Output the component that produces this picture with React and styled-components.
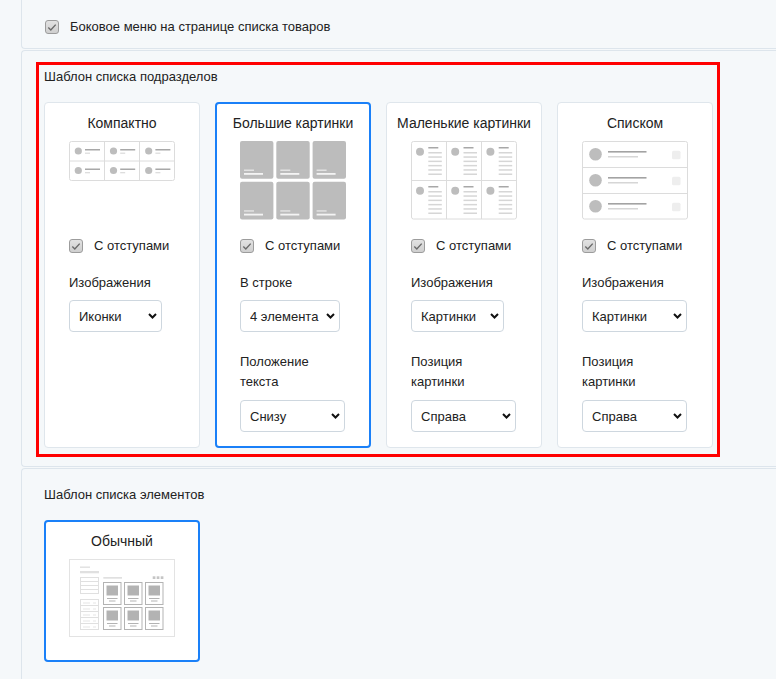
import React from "react";
import styled, { createGlobalStyle } from "styled-components";

const GlobalStyle = createGlobalStyle`
  html, body {
    margin: 0;
    padding: 0;
    background: #f5f8fa;
    font-family: "Liberation Sans", Arial, sans-serif;
    color: #222;
  }
`;

const Page = styled.div`
  padding-left: 21px;
  overflow: hidden;
  height: 679px;
`;

const Section = styled.div`
  border: 1px solid #dde5ec;
  border-right: none;
  border-top: ${(p) => (p.first ? "none" : "1px solid #dde5ec")};
  border-radius: ${(p) => (p.first ? "0 0 0 4px" : "4px 0 0 4px")};
  margin-top: ${(p) => (p.first ? "0" : "1px")};
  padding: ${(p) => p.pad};
`;

const CheckRow = styled.label`
  display: flex;
  align-items: center;
  gap: ${(p) => p.gap || 11}px;
  height: 20px;
  font-size: 13px;
  line-height: 20px;
`;

const Box = styled.span`
  width: 14px;
  height: 14px;
  box-sizing: border-box;
  border: 1px solid #9c9c9c;
  border-radius: 3px;
  background: linear-gradient(#e2e2e2, #cfcfcf);
  display: flex;
  align-items: center;
  justify-content: center;
  flex: none;
`;

const Highlight = styled.div`
  width: fit-content;
  border: 3px solid #ff0000;
  padding: 3px 4px 6px 5px;
`;

const GroupTitle = styled.div`
  font-size: 13px;
  line-height: 18px;
  margin-bottom: ${(p) => p.mb}px;
`;

const Cards = styled.div`
  display: flex;
  gap: 15px;
  align-items: stretch;
`;

const Card = styled.div`
  width: 156px;
  box-sizing: border-box;
  background: #fff;
  border: ${(p) => (p.active ? "2px solid #1a80f8" : "1px solid #dfe6ec")};
  border-radius: 4px;
  padding: ${(p) => (p.active ? "9px 23px 14px" : "10px 24px 15px")};
  display: flex;
  flex-direction: column;
`;

const CardTitle = styled.div`
  font-size: 14px;
  line-height: 20px;
  text-align: center;
  margin: 0 -20px 8px;
  white-space: nowrap;
`;

const Preview = styled.div`
  height: ${(p) => p.h || 80}px;
  margin-bottom: ${(p) => p.mb ?? 15}px;
  display: flex;
  align-items: flex-start;
`;

const FieldLabel = styled.div`
  font-size: 13px;
  line-height: 20px;
  margin-top: ${(p) => p.mt}px;
  margin-bottom: ${(p) => p.mb}px;
`;

const SelectWrap = styled.div`
  position: relative;
  width: ${(p) => p.w}px;
`;

const SelectBox = styled.select`
  appearance: none;
  -webkit-appearance: none;
  width: 100%;
  height: 32px;
  box-sizing: border-box;
  border: 1px solid #ced7df;
  border-radius: 4px;
  background: #fff;
  padding: 0 20px 0 9px;
  font-family: "Liberation Sans", Arial, sans-serif;
  font-size: 13px;
  color: #222;
  outline: none;
`;

const Chevron = styled.svg`
  position: absolute;
  right: 5px;
  top: 13px;
  pointer-events: none;
`;

const Check = () => (
  <Box>
    <svg width="10" height="9" viewBox="0 0 10 9">
      <path d="M1.3 4.6 L3.8 7 L8.7 1.6" fill="none" stroke="#6a6a6a" strokeWidth="1.4" />
    </svg>
  </Box>
);

const Select = ({ value, w }) => (
  <SelectWrap w={w}>
    <SelectBox defaultValue={value}>
      <option>{value}</option>
    </SelectBox>
    <Chevron width="9" height="6" viewBox="0 0 9 6">
      <path d="M1 1 L4.5 4.5 L8 1" fill="none" stroke="#111" strokeWidth="2" />
    </Chevron>
  </SelectWrap>
);

const CompactPic = () => {
  const cells = [];
  for (let r = 0; r < 2; r++)
    for (let c = 0; c < 3; c++) {
      const ox = c * 35.2;
      const oy = r * 19.5;
      cells.push(
        <g key={`${r}${c}`}>
          <circle cx={ox + 9.3} cy={oy + 10} r="3.6" fill="#bdbdbd" />
          <rect x={ox + 16} y={oy + 8} width="15" height="1.5" fill="#a8a8a8" />
          <rect x={ox + 16} y={oy + 11.6} width="5" height="1.2" fill="#dadada" />
        </g>
      );
    }
  return (
    <svg width="106" height="40" viewBox="0 0 106 40">
      <rect x="0.5" y="0.5" width="105" height="39" rx="2" fill="#fff" stroke="#dcdcdc" />
      <line x1="35.5" y1="0.5" x2="35.5" y2="39.5" stroke="#dcdcdc" />
      <line x1="70.5" y1="0.5" x2="70.5" y2="39.5" stroke="#dcdcdc" />
      <line x1="0.5" y1="20" x2="105.5" y2="20" stroke="#dcdcdc" />
      {cells}
    </svg>
  );
};

const BigPic = () => {
  const tiles = [];
  for (let r = 0; r < 2; r++)
    for (let c = 0; c < 3; c++) {
      const x = c * 36.3;
      const y = r * 40.7;
      tiles.push(
        <g key={`${r}${c}`}>
          <rect x={x} y={y} width="33.4" height="37.7" rx="2" fill="#bcbcbc" />
          <rect x={x + 4} y={y + 28.5} width="10" height="1.5" fill="#e2e2e2" />
          <rect x={x + 4} y={y + 32} width="19" height="1.8" fill="#f4f4f4" />
        </g>
      );
    }
  return (
    <svg width="106" height="79" viewBox="0 0 106 79">
      {tiles}
    </svg>
  );
};

const SmallPic = () => {
  const cells = [];
  for (let r = 0; r < 2; r++)
    for (let c = 0; c < 3; c++) {
      const ox = c * 35.2;
      const oy = r * 39;
      cells.push(
        <g key={`${r}${c}`}>
          <circle cx={ox + 9} cy={oy + 10.7} r="4" fill="#bdbdbd" />
          <rect x={ox + 17.3} y={oy + 6} width="10" height="1.5" fill="#a8a8a8" />
          {[11, 15.3, 19.6, 23.9, 28.2, 32.5].map((ly) => (
            <rect key={ly} x={ox + 17.3} y={oy + ly} width="13.5" height="1.5" fill="#d6d6d6" />
          ))}
        </g>
      );
    }
  return (
    <svg width="106" height="79" viewBox="0 0 106 79">
      <rect x="0.5" y="0.5" width="105" height="77.5" rx="2" fill="#fff" stroke="#dcdcdc" />
      <line x1="35.5" y1="0.5" x2="35.5" y2="78" stroke="#dcdcdc" />
      <line x1="70.5" y1="0.5" x2="70.5" y2="78" stroke="#dcdcdc" />
      <line x1="0.5" y1="39.5" x2="105.5" y2="39.5" stroke="#dcdcdc" />
      {cells}
    </svg>
  );
};

const ListPic = () => (
  <svg width="106" height="79" viewBox="0 0 106 79">
    <rect x="0.5" y="0.5" width="105" height="77.5" rx="2" fill="#fff" stroke="#dcdcdc" />
    <line x1="0.5" y1="26.5" x2="105.5" y2="26.5" stroke="#dcdcdc" />
    <line x1="0.5" y1="52.5" x2="105.5" y2="52.5" stroke="#dcdcdc" />
    {[0, 26, 52].map((oy) => (
      <g key={oy}>
        <circle cx="13.5" cy={oy + 13.3} r="6.3" fill="#bdbdbd" />
        <rect x="26" y={oy + 10} width="38.5" height="1.6" fill="#a3a3a3" />
        <rect x="26" y={oy + 15} width="30" height="1.5" fill="#d6d6d6" />
        <rect x="90" y={oy + 9.7} width="8.5" height="8.5" rx="1.5" fill="#eeeeee" />
      </g>
    ))}
  </svg>
);

const RegularPic = () => (
  <svg width="106" height="78" viewBox="0 0 106 78">
    <rect x="0.5" y="0.5" width="105" height="77" fill="#fff" stroke="#e3e3e3" />
    <rect x="11" y="7.5" width="10" height="1.4" fill="#e0e0e0" />
    <rect x="11" y="12" width="19" height="2.3" fill="#e0e0e0" />
    <rect x="11.5" y="18.5" width="18" height="16" fill="none" stroke="#e0e0e0" />
    {[22.5, 26.5, 30.5].map((y) => (
      <line key={y} x1="11.5" y1={y} x2="29.5" y2={y} stroke="#e0e0e0" />
    ))}
    <rect x="11.5" y="40.5" width="18" height="30" fill="none" stroke="#e0e0e0" />
    {[46.5, 52.5, 58.5, 64.5].map((y) => (
      <line key={y} x1="11.5" y1={y} x2="29.5" y2={y} stroke="#e0e0e0" />
    ))}
    {[43.5, 49.5, 55.5, 61.5, 67.5].map((y) => (
      <g key={y}>
        <rect x="14" y={y} width="7" height="1" fill="#e6e6e6" />
        <rect x="24" y={y} width="3" height="1" fill="#e6e6e6" />
      </g>
    ))}
    <rect x="34.3" y="18" width="18.7" height="1.7" fill="#e0e0e0" />
    {[83.7, 87.7, 91.7].map((x) => (
      <rect key={x} x={x} y="17.3" width="2.7" height="2.7" fill="#c5c5c5" />
    ))}
    {[23.5, 48.5].map((y) =>
      [34.5, 55.5, 76.5].map((x) => (
        <g key={`${x}-${y}`}>
          <rect x={x} y={y} width="17.5" height="22" fill="#fff" stroke="#b3b3b3" />
          <rect x={x + 3} y={y + 3} width="11.5" height="10" fill="#b3b3b3" />
          <rect x={x + 3.5} y={y + 15.5} width="10.5" height="1" fill="#b3b3b3" />
          <rect x={x + 5.5} y={y + 18} width="6.5" height="1" fill="#b3b3b3" />
        </g>
      ))
    )}
  </svg>
);

const templates = [
  {
    title: "Компактно",
    pic: <CompactPic />,
    fields: [{ label: ["Изображения"], value: "Иконки", w: 93 }],
  },
  {
    title: "Большие картинки",
    pic: <BigPic />,
    active: true,
    fields: [
      { label: ["В строке"], value: "4 элемента", w: 100 },
      { label: ["Положение", "текста"], value: "Снизу", w: 105 },
    ],
  },
  {
    title: "Маленькие картинки",
    pic: <SmallPic />,
    fields: [
      { label: ["Изображения"], value: "Картинки", w: 93 },
      { label: ["Позиция", "картинки"], value: "Справа", w: 105 },
    ],
  },
  {
    title: "Списком",
    pic: <ListPic />,
    fields: [
      { label: ["Изображения"], value: "Картинки", w: 105 },
      { label: ["Позиция", "картинки"], value: "Справа", w: 105 },
    ],
  },
];

function App() {
  return (
    <>
      <GlobalStyle />
      <Page>
        <Section first pad="17px 0 11px 23px">
          <CheckRow>
            <Check />
            Боковое меню на странице списка товаров
          </CheckRow>
        </Section>

        <Section pad="11px 0 9px 14px">
          <Highlight>
            <GroupTitle mb={16}>Шаблон списка подразделов</GroupTitle>
            <Cards>
              {templates.map((t) => (
                <Card key={t.title} active={t.active}>
                  <CardTitle>{t.title}</CardTitle>
                  <Preview>{t.pic}</Preview>
                  <CheckRow>
                    <Check />
                    С отступами
                  </CheckRow>
                  {t.fields.map((f, i) => (
                    <React.Fragment key={i}>
                      <FieldLabel mt={i === 0 ? 17 : 20} mb={i === 0 ? 7 : 8}>
                        {f.label.map((l) => (
                          <div key={l}>{l}</div>
                        ))}
                      </FieldLabel>
                      <Select value={f.value} w={f.w} />
                    </React.Fragment>
                  ))}
                </Card>
              ))}
            </Cards>
          </Highlight>
        </Section>

        <Section pad="17px 0 20px 22px">
          <GroupTitle mb={16}>Шаблон списка элементов</GroupTitle>
          <Card active>
            <CardTitle>Обычный</CardTitle>
            <Preview h={78} mb={9}>
              <RegularPic />
            </Preview>
          </Card>
        </Section>
      </Page>
    </>
  );
}

export default App;
